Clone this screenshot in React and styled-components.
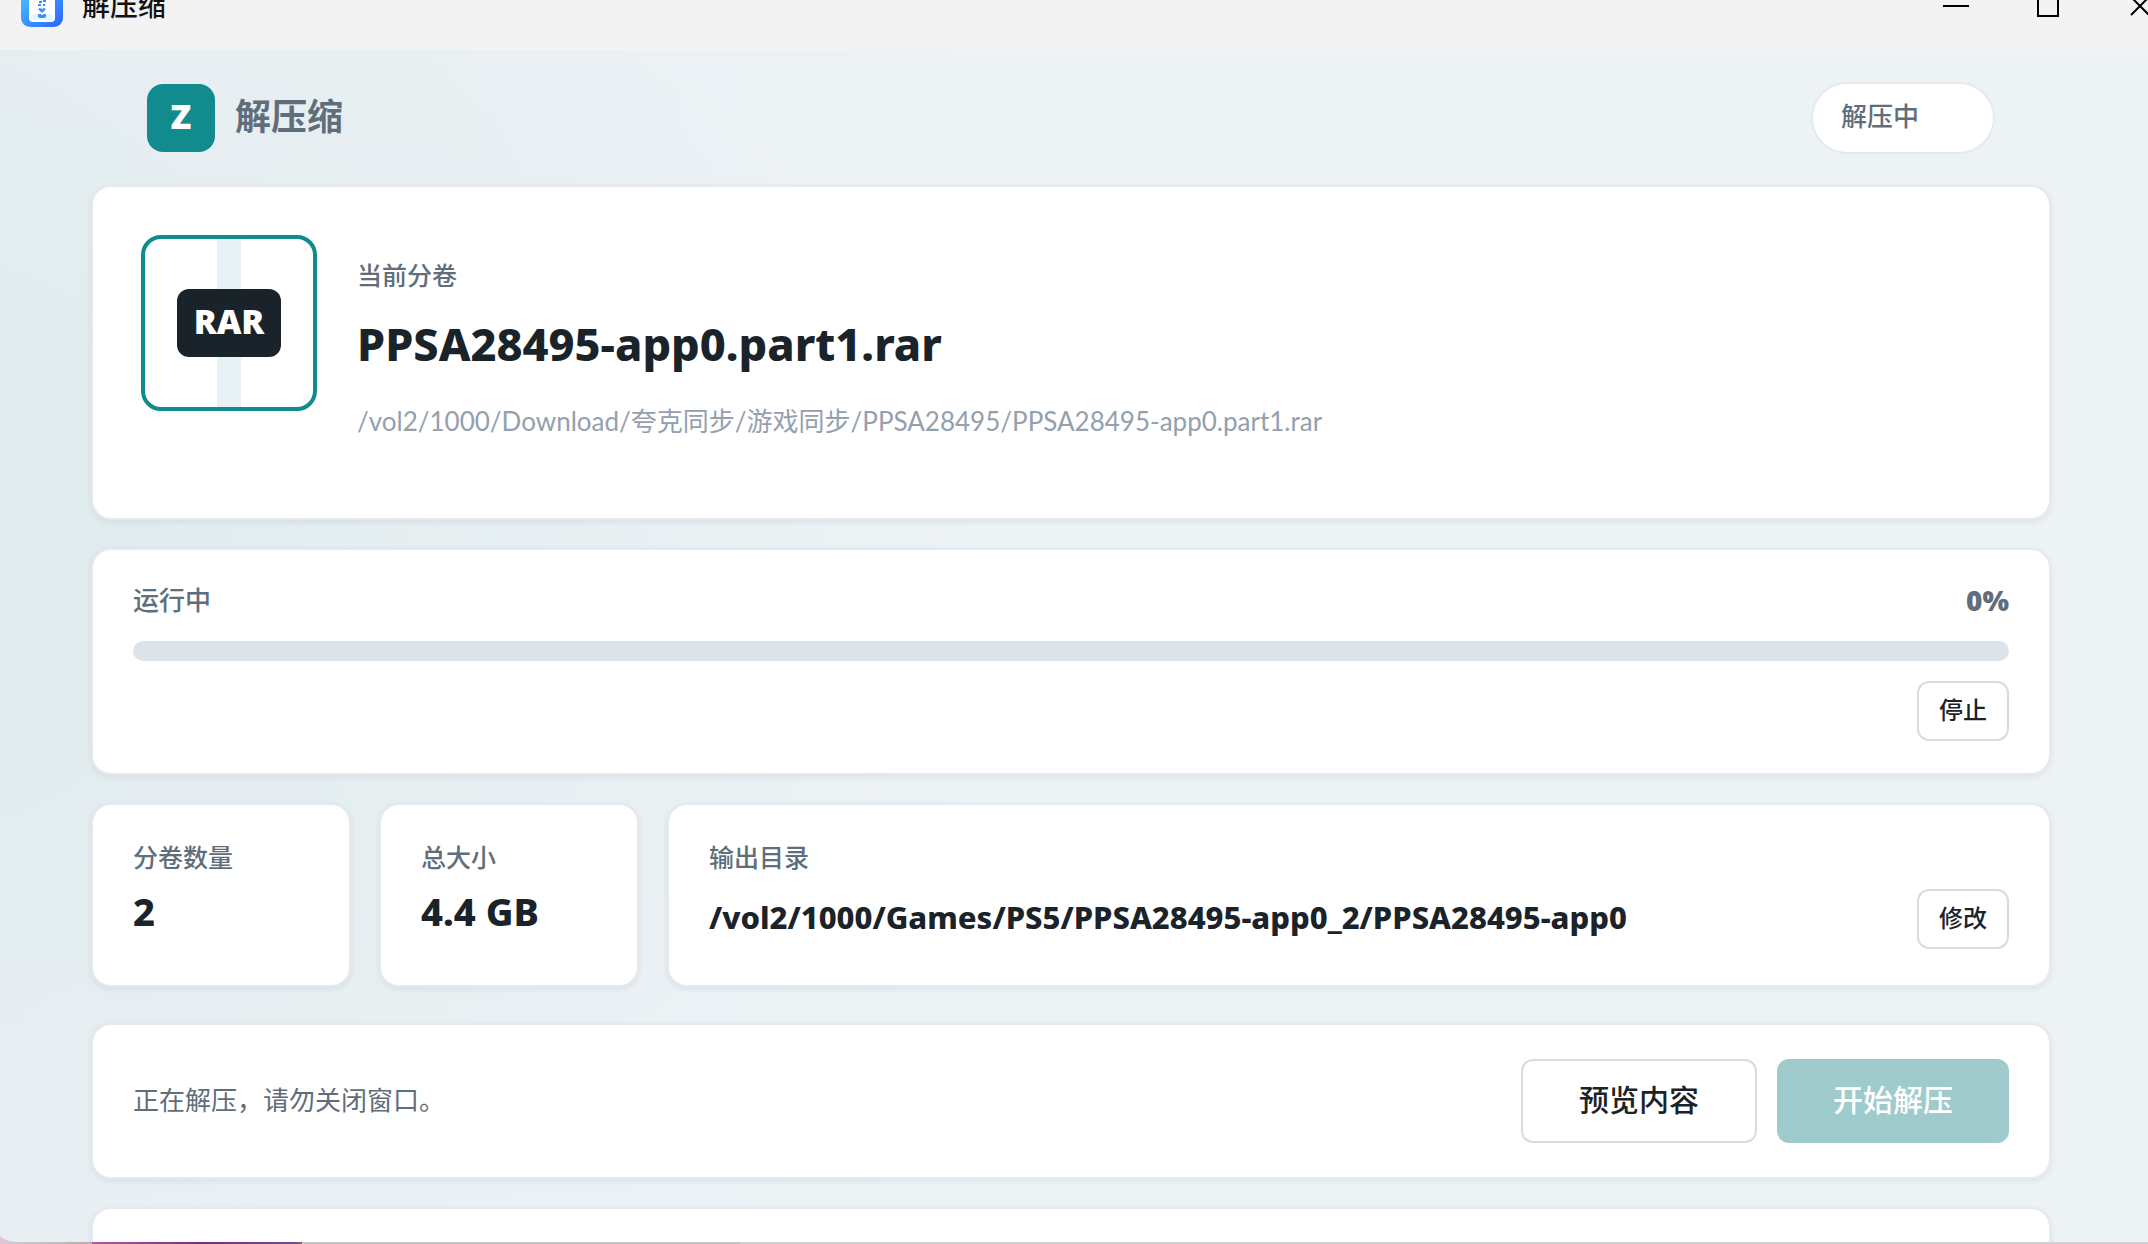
import styled, { createGlobalStyle, css } from "styled-components";

const App = () => {
  return (
    <Desktop>
      <GlobalStyle />
      <Window>
        <TitleBar>
          <AppName>
            <AppIcon />
            <span>解压缩</span>
          </AppName>
          <WindowButton aria-label="最小化">
            <svg viewBox="0 0 26 26">
              <path d="M0 13h26" />
            </svg>
          </WindowButton>
          <WindowButton aria-label="最大化">
            <svg viewBox="0 0 26 26">
              <path d="M3 3h20v20H3z" />
            </svg>
          </WindowButton>
          <WindowButton aria-label="关闭">
            <svg viewBox="0 0 26 26">
              <path d="M4 4l18 18M22 4L4 22" />
            </svg>
          </WindowButton>
        </TitleBar>
        <Page>
          <Header>
            <Brand>
              <Logo>Z</Logo>
              <h1>解压缩</h1>
            </Brand>
            <Status>解压中</Status>
          </Header>

          <ArchiveCard>
            <ArchiveIcon>
              <span>RAR</span>
            </ArchiveIcon>
            <ArchiveInfo>
              <Label>当前分卷</Label>
              <h2>PPSA28495-app0.part1.rar</h2>
              <p>
                /vol2/1000/Download/夸克同步/游戏同步/PPSA28495/PPSA28495-app0.part1.rar
              </p>
            </ArchiveInfo>
          </ArchiveCard>

          <ProgressCard>
            <ProgressHead>
              <span id="progress-label">运行中</span>
              <strong>0%</strong>
            </ProgressHead>
            <Track
              role="progressbar"
              aria-labelledby="progress-label"
              aria-valuenow={0}
            >
              <Fill style={{ width: "0%" }} />
            </Track>
            <Button>停止</Button>
          </ProgressCard>

          <Stats>
            <StatCard>
              <Label>分卷数量</Label>
              <Value>2</Value>
            </StatCard>
            <StatCard>
              <Label>总大小</Label>
              <Value>4.4 GB</Value>
            </StatCard>
            <StatCard>
              <Label>输出目录</Label>
              <Output>
                <strong>
                  /vol2/1000/Games/PS5/PPSA28495-app0_2/PPSA28495-app0
                </strong>
                <Button>修改</Button>
              </Output>
            </StatCard>
          </Stats>

          <ActionCard>
            <p>正在解压，请勿关闭窗口。</p>
            <Button $large>预览内容</Button>
            <Button $large $primary disabled>
              开始解压
            </Button>
          </ActionCard>

          <LogCard />
        </Page>
      </Window>
    </Desktop>
  );
};

const AppIcon = () => (
  <svg viewBox="0 0 42 42" width="42" height="42" aria-hidden="true">
    <defs>
      <linearGradient id="icon-bg" x1="0" y1="0" x2="1" y2="1">
        <stop offset="0" stopColor="#4cc9ff" />
        <stop offset="1" stopColor="#2b62ff" />
      </linearGradient>
    </defs>
    <rect width="42" height="42" rx="9" fill="url(#icon-bg)" />
    <rect x="8" y="5" width="26" height="32" rx="4" fill="#fff" />
    <rect x="10" y="29" width="22" height="6" rx="2" fill="#e3f5ff" />
    <g fill="#3b8cff">
      <path d="M17 8h3v3h-3zM21 11h3v3h-3zM22 14h3v3h-3zM18 16h3v2h-3zM22 19h2v2h-2zM17 19h3v2h-3zM17 24l2-1 2 1 2-1 2 1-4 4z" />
      <path d="M17 29h3v1h2v-1h3v2a2 2 0 0 1-2 2h-4a2 2 0 0 1-2-2z" />
    </g>
  </svg>
);

const GlobalStyle = createGlobalStyle`
  * {
    box-sizing: border-box;
  }
  body {
    margin: 0;
    color: #1b232a;
    font-family: Lato, "Noto Sans CJK SC", sans-serif;
  }
  h1, h2, p {
    margin: 0;
  }
  button {
    font-family: inherit;
  }
`;

const heavy = css`
  font-family: "Noto Sans", "Noto Sans CJK SC", sans-serif;
`;

const Desktop = styled.div`
  height: 100vh;
  display: flex;
  flex-direction: column;
  overflow: hidden;
  background: linear-gradient(
    90deg,
    #dcc8d6 0,
    #b9aeb0 92px,
    #b4579a 92px,
    #7b2d86 200px,
    #6f4a92 290px,
    #8c5a78 302px,
    #c4c4c4 302px,
    #c4c4c4 740px,
    #d0d0d0 740px
  );
`;

/* the window hangs over the screen edges on three sides */
const Window = styled.div`
  flex: 1;
  min-height: 0;
  margin: -38px -38px 2px -8px;
  display: flex;
  flex-direction: column;
  overflow: hidden;
  border-radius: 0 0 0 24px;
  background: radial-gradient(
      ellipse 1000px 700px at 0 580px,
      rgba(15, 139, 100, 0.04),
      rgba(15, 139, 100, 0)
    ),
    linear-gradient(90deg, #e8eff3, #edf2f5 45%);
`;

const TitleBar = styled.header`
  flex: none;
  height: 88px;
  display: flex;
  align-items: center;
  background: #f3f3f3;
`;

const AppName = styled.div`
  flex: 1;
  display: flex;
  align-items: center;
  gap: 19px;
  padding-left: 29px;
  color: #111;
  font-size: 28px;
  font-weight: 500;
  line-height: 40px;
  span {
    padding-bottom: 2px;
  }
`;

const WindowButton = styled.button`
  width: 92px;
  height: 88px;
  display: grid;
  place-items: center;
  padding: 0;
  border: 0;
  background: none;
  svg {
    width: 26px;
    height: 26px;
    fill: none;
    stroke: #000;
    stroke-width: 2;
  }
`;

const Page = styled.main`
  padding: 32px 135px 0 99px;
`;

const Header = styled.div`
  display: flex;
  align-items: center;
  justify-content: space-between;
  height: 72px;
  margin: 0 56px 31px;
`;

const Brand = styled.div`
  display: flex;
  align-items: center;
  gap: 20px;
  h1 {
    padding-bottom: 4px;
    color: #5f6e7a;
    font-size: 36px;
    font-weight: 700;
    line-height: 52px;
  }
`;

const Logo = styled.div`
  width: 68px;
  height: 68px;
  border-radius: 16px;
  background: #118b8d;
  color: #fff;
  font-size: 34px;
  font-weight: 900;
  line-height: 64px;
  text-align: center;
  ${heavy}
`;

const Status = styled.div`
  width: 184px;
  height: 72px;
  padding: 0 28px;
  border: 2px solid #e4eaf0;
  border-radius: 36px;
  background: #fff;
  color: #5f6e7a;
  font-size: 26px;
  font-weight: 500;
  line-height: 64px;
`;

const Card = styled.section`
  border: 2px solid #e4eaf0;
  border-radius: 20px;
  background: #fff;
  box-shadow: 0 2px 6px rgba(27, 35, 42, 0.08);
`;

const ArchiveCard = styled(Card)`
  display: flex;
  gap: 40px;
  min-height: 335px;
  padding: 48px;
`;

const ArchiveIcon = styled.div`
  flex: none;
  width: 176px;
  height: 176px;
  display: grid;
  place-items: center;
  border: 4px solid #118b8d;
  border-radius: 20px;
  background: linear-gradient(#e8f2f4, #e8f2f4) center / 24px 100% no-repeat
    #fff;
  span {
    width: 104px;
    height: 68px;
    border-radius: 12px;
    background: #1b232a;
    color: #fff;
    font-size: 34px;
    font-weight: 900;
    line-height: 64px;
    text-align: center;
    ${heavy}
  }
`;

const ArchiveInfo = styled.div`
  min-width: 0;
  padding-top: 22px;
  h2 {
    margin: 18px 0 24px;
    font-size: 45px;
    font-weight: 800;
    line-height: 66px;
    ${heavy}
  }
  p {
    color: #93a0ae;
    font-size: 26px;
    line-height: 40px;
  }
`;

const Label = styled.div`
  color: #5f6e7a;
  font-size: 25px;
  font-weight: 500;
  line-height: 36px;
`;

const ProgressCard = styled(Card)`
  display: flex;
  flex-direction: column;
  align-items: flex-end;
  margin-top: 28px;
  padding: 32px 40px;
`;

const ProgressHead = styled.div`
  width: 100%;
  display: flex;
  justify-content: space-between;
  margin-bottom: 23px;
  color: #5f6e7a;
  font-size: 26px;
  font-weight: 500;
  line-height: 36px;
  strong {
    font-size: 28px;
    font-weight: 900;
    ${heavy}
  }
`;

const Track = styled.div`
  width: 100%;
  height: 20px;
  margin-bottom: 20px;
  overflow: hidden;
  border-radius: 10px;
  background: #dce4eb;
`;

const Fill = styled.div`
  height: 100%;
  background: #118b8d;
`;

const Button = styled.button`
  flex: none;
  height: 60px;
  padding: 0 20px 2px;
  border: 2px solid #d3dde5;
  border-radius: 12px;
  background: #fff;
  color: #1b232a;
  font-size: 24px;
  font-weight: 500;
  line-height: 36px;
  ${({ $large }) =>
    $large &&
    css`
      height: 84px;
      padding: 0 56px 4px;
      font-size: 30px;
      line-height: 44px;
    `}
  ${({ $primary }) =>
    $primary &&
    css`
      border: 0;
      background: #a0cbcc;
      color: #fff;
    `}
`;

const Stats = styled.div`
  display: grid;
  grid-template-columns: 260px 260px 1fr;
  gap: 28px;
  margin: 28px 0 36px;
`;

const StatCard = styled(Card)`
  padding: 34px 40px 36px;
`;

const Value = styled.div`
  margin-top: 12px;
  font-size: 38px;
  font-weight: 800;
  line-height: 48px;
  ${heavy}
`;

const Output = styled.div`
  display: flex;
  align-items: center;
  justify-content: space-between;
  margin-top: 14px;
  strong {
    padding-bottom: 4px;
    font-size: 31px;
    font-weight: 800;
    line-height: 44px;
    ${heavy}
  }
`;

const ActionCard = styled(Card)`
  display: flex;
  align-items: center;
  gap: 20px;
  padding: 34px 40px;
  p {
    flex: 1;
    padding-bottom: 2px;
    color: #5f6e7a;
    font-size: 26px;
    line-height: 40px;
  }
`;

const LogCard = styled(Card)`
  height: 120px;
  margin-top: 28px;
`;

export default App;
